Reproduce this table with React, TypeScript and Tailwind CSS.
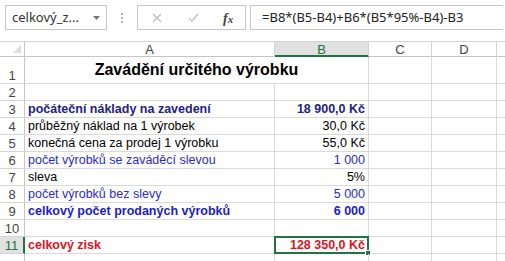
import React from "react";

type RowDef = {
  n: number;
  a?: string;
  aCls?: string;
  b?: string;
  bCls?: string;
};

const rows: RowDef[] = [
  { n: 2 },
  { n: 3, a: "počáteční náklady na zavedení", aCls: "font-bold text-[#22227f]", b: "18 900,0 Kč", bCls: "font-bold text-[#22227f]" },
  { n: 4, a: "průběžný náklad na 1 výrobek", aCls: "text-black", b: "30,0 Kč", bCls: "text-black" },
  { n: 5, a: "konečná cena za prodej 1 výrobku", aCls: "text-black", b: "55,0 Kč", bCls: "text-black" },
  { n: 6, a: "počet výrobků se zaváděcí slevou", aCls: "text-[#2b2bc8]", b: "1 000", bCls: "text-[#2b2bc8]" },
  { n: 7, a: "sleva", aCls: "text-black", b: "5%", bCls: "text-black" },
  { n: 8, a: "počet výrobků bez slevy", aCls: "text-[#2b2bc8]", b: "5 000", bCls: "text-[#2b2bc8]" },
  { n: 9, a: "celkový počet prodaných výrobků", aCls: "font-bold text-[#1c1ccc]", b: "6 000", bCls: "font-bold text-[#1c1ccc]" },
  { n: 10 },
  { n: 11, a: "celkový zisk", aCls: "font-bold text-[#e1141e]", b: "128 350,0 Kč", bCls: "font-bold text-[#e1141e]" },
  { n: 12 },
];

const cellFont = { fontFamily: '"Liberation Sans", Arial, sans-serif' };

export default function App() {
  return (
    <div className="w-[505px] h-[261px] overflow-hidden bg-white" style={cellFont}>
      {/* toolbar */}
      <div className="h-[41px] flex items-start pt-[5px] pl-[5px] gap-0" style={{ fontFamily: '"Noto Sans", "Open Sans", sans-serif' }}>
        <div className="w-[102px] h-[25px] border border-[#c6c6c6] flex items-center pl-[6px] pr-[6px] text-[13px] text-[#333]">
          <span className="flex-1">celkový_z...</span>
          <svg width="7" height="4" viewBox="0 0 7 4"><path d="M0 0 L7 0 L3.5 4 Z" fill="#777" /></svg>
        </div>
        <div className="w-[30px] h-[25px] flex flex-col items-center justify-center gap-[2px]">
          <div className="w-[2px] h-[2px] bg-[#b5b5b5]" />
          <div className="w-[2px] h-[2px] bg-[#b5b5b5]" />
          <div className="w-[2px] h-[2px] bg-[#b5b5b5]" />
        </div>
        <div className="w-[109px] h-[25px] border border-[#c6c6c6] flex items-center">
          <div className="w-[38px] flex justify-center">
            <svg width="10" height="10" viewBox="0 0 10 10"><path d="M1 1 L9 9 M9 1 L1 9" stroke="#bdbdbd" strokeWidth="1.3" /></svg>
          </div>
          <div className="w-[36px] flex justify-center">
            <svg width="11" height="9" viewBox="0 0 11 9"><path d="M1 5 L4 8 L10 1" stroke="#c4c4c4" strokeWidth="1.6" fill="none" /></svg>
          </div>
          <div className="w-[34px] flex justify-center" style={{ fontFamily: '"Liberation Serif", serif' }}>
            <span className="italic font-bold text-[#444] leading-none">
              <span className="text-[14px]">f</span>
              <span className="text-[11px]">x</span>
            </span>
          </div>
        </div>
        <div className="w-[4px]" />
        <div className="w-[253px] h-[25px] border border-r-0 border-[#c6c6c6] flex items-center pl-[11px] text-[13px] text-[#222]">
          =B8*(B5-B4)+B6*(B5*95%-B4)-B3
        </div>
      </div>

      {/* column headers */}
      <div className="flex h-[16px] border-t border-[#d5d5d5] text-[13px] text-[#444] bg-white">
        <div className="w-[25px] h-full border-r border-b border-[#c6c6c6] relative">
          <svg className="absolute right-[3px] bottom-[3px]" width="8" height="8" viewBox="0 0 8 8"><path d="M8 0 L8 8 L0 8 Z" fill="#dcdcdc" /></svg>
        </div>
        <div className="w-[250px] h-full border-r border-b border-[#d5d5d5] border-b-[#c6c6c6] flex items-center justify-center leading-none">A</div>
        <div className="w-[94px] h-full border-r border-[#d5d5d5] border-b-2 border-b-[#217346] bg-[#e1e1e1] text-[#217346] flex items-center justify-center leading-none pt-[1px]">B</div>
        <div className="w-[63px] h-full border-r border-b border-[#d5d5d5] border-b-[#c6c6c6] flex items-center justify-center leading-none">C</div>
        <div className="w-[65px] h-full border-r border-b border-[#d5d5d5] border-b-[#c6c6c6] flex items-center justify-center leading-none">D</div>
        <div className="flex-1 h-full border-b border-[#c6c6c6]" />
      </div>

      {/* row 1 */}
      <div className="flex h-[27px]">
        <div className="w-[25px] h-full border-r border-b border-[#d5d5d5] border-r-[#c6c6c6] flex items-end justify-center pb-[1px] text-[13px] text-[#444] leading-none">1</div>
        <div className="w-[344px] h-full border-r border-b border-[#dadada] flex items-end justify-center pb-[5px] text-[16px] font-bold text-black leading-none">
          Zavádění určitého výrobku
        </div>
        <div className="w-[63px] h-full border-r border-b border-[#dadada]" />
        <div className="w-[65px] h-full border-r border-b border-[#dadada]" />
        <div className="flex-1 h-full border-b border-[#dadada]" />
      </div>

      {rows.map((r) => {
        const sel = r.n === 11;
        return (
          <div key={r.n} className="flex h-[17px]">
            <div
              className={
                sel
                  ? "w-[25px] h-full border-r-2 border-r-[#217346] border-b border-b-[#d5d5d5] bg-[#e1e1e1] text-[#217346] flex items-end justify-center text-[13px] leading-none pb-[1px]"
                  : "w-[25px] h-full border-r border-b border-[#d5d5d5] border-r-[#c6c6c6] text-[#444] flex items-end justify-center text-[13px] leading-none pb-[1px]"
              }
            >
              {r.n <= 11 ? r.n : ""}
            </div>
            <div className={"w-[250px] h-full border-r border-b border-[#dadada] flex items-end pl-[3px] pb-[2px] text-[12.5px] leading-none whitespace-nowrap " + (r.aCls ?? "")}>
              {r.a}
            </div>
            <div className={"relative w-[94px] h-full border-r border-b border-[#dadada] flex items-end justify-end pr-[3px] pb-[2px] text-[12.5px] leading-none whitespace-nowrap " + (r.bCls ?? "")}>
              {r.b}
              {sel && (
                <>
                  <div className="absolute left-[-1px] top-[-1px] right-[-1px] bottom-[-1px] border-2 border-[#217346]" />
                  <div className="absolute right-[-3px] bottom-[-3px] w-[6px] h-[6px] bg-[#217346] border border-white" />
                </>
              )}
            </div>
            <div className="w-[63px] h-full border-r border-b border-[#dadada]" />
            <div className="w-[65px] h-full border-r border-b border-[#dadada]" />
            <div className="flex-1 h-full border-b border-[#dadada]" />
          </div>
        );
      })}
    </div>
  );
}
